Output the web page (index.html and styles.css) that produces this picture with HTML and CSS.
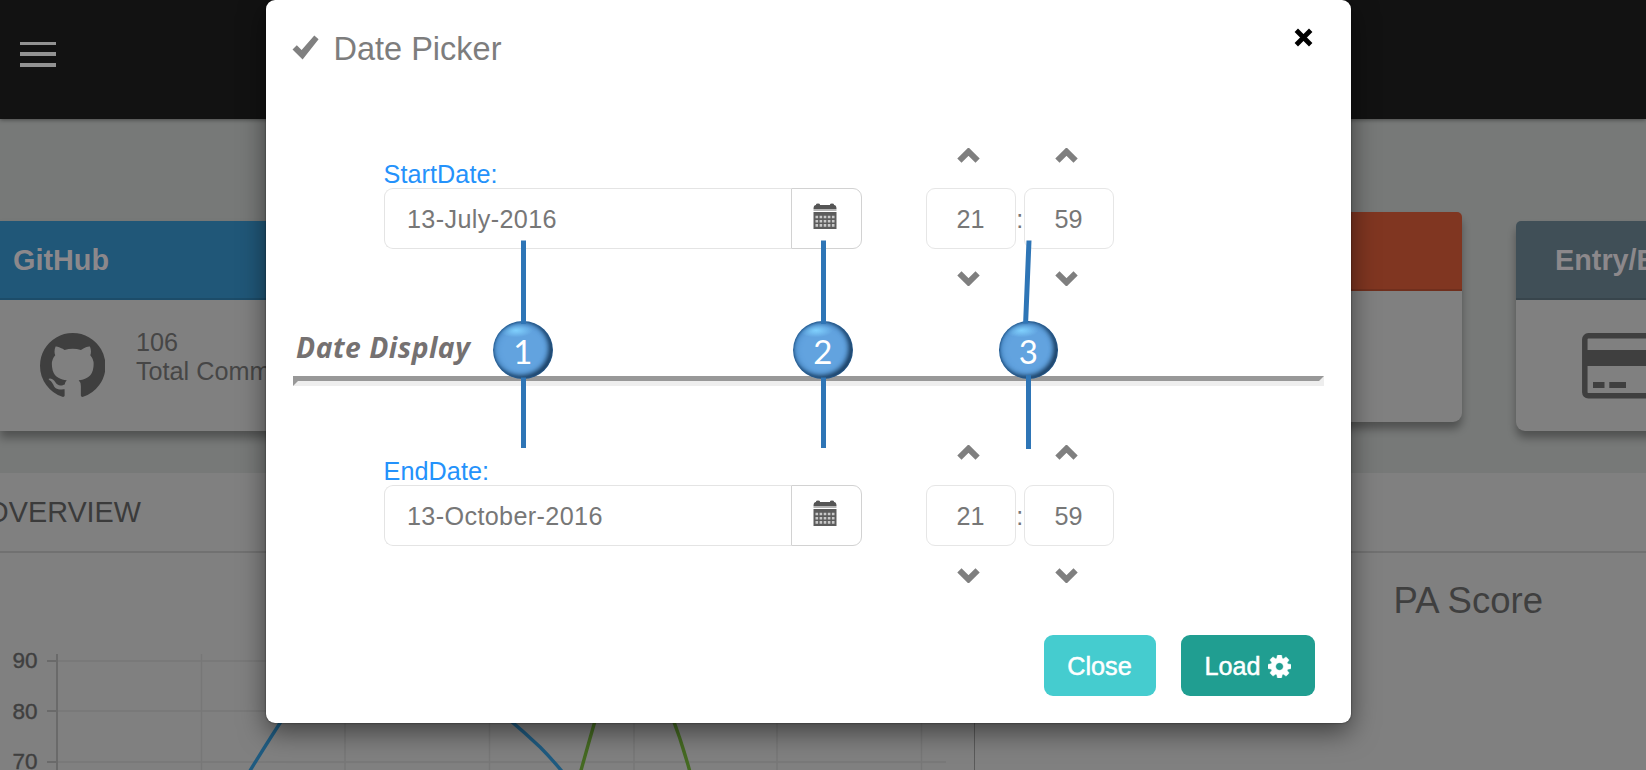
FILE: index.html
```html
<!DOCTYPE html>
<html lang="en">
<head>
<meta charset="utf-8">
<title>Date Picker</title>
<link rel="stylesheet" href="styles.css">
</head>
<body>
<div class="page">
  <header class="topbar">
    <div class="burger"><span></span><span></span><span></span></div>
  </header>

  <section class="cards">
    <article class="card card-github">
      <h3 class="card-head blue">GitHub</h3>
      <div class="card-body">
        <svg class="octocat" viewBox="128 128 1536 1500"><path d="M896 128q209 0 385.5 103t279.5 279.5 103 385.5q0 251-146.5 451.5t-378.5 277.5q-27 5-40-7t-13-30q0-3 .5-76.5t.5-134.5q0-97-52-142 57-6 102.5-18t94-39 81-66.5 53-105 20.5-150.5q0-119-79-206 37-91-8-204-28-9-81 11t-92 44l-38 24q-93-26-192-26t-192 26q-16-11-42.5-27t-83.5-38.5-85-13.5q-45 113-8 204-79 87-79 206 0 85 20.5 150t52.5 105 80.5 67 94 39 102.5 18q-39 36-49 103-21 10-45 15t-57 5-65.5-21.5-55.5-62.5q-19-32-48.5-52t-49.5-24l-20-3q-21 0-29 4.5t-5 11.5 9 14 13 12l7 5q22 10 43.5 38t31.5 51l10 23q13 38 44 61.5t67 30 69.5 7 55.5-3.5l23-4q0 38 .5 88.5t.5 54.5q0 18-13 30t-40 7q-232-77-378.5-277.5t-146.5-451.5q0-209 103-385.5t279.5-279.5 385.5-103z"/></svg>
        <div class="stat"><div>106</div><div>Total Comm</div></div>
      </div>
    </article>
    <article class="card card-raised">
      <h3 class="card-head orange"></h3>
      <div class="card-body"></div>
    </article>
    <article class="card card-entry">
      <h3 class="card-head slate">Entry/Exit</h3>
      <div class="card-body">
        <svg class="credit" viewBox="0 0 84 66"><rect x="2.8" y="2.8" width="78.4" height="60" rx="3.5" fill="none" stroke="#3f3f3f" stroke-width="5.5"/><path d="M3 17h78v16H3zM11 49h11.5v6H11zM27.300 49h16.700v6H27.300z" fill="#3f3f3f"/></svg>
      </div>
    </article>
  </section>

  <section class="panel">
    <div class="panel-head"><span class="panel-title">OVERVIEW</span></div>
    <div class="panel-body">
      <div class="chart">
        <svg width="974" height="217" viewBox="0 553 974 217">
          <g class="grid">
            <path d="M57 661H946M57 711H946M57 762H946M201.500 654V770M345 654V770M489.500 654V770M634 654V770M777 654V770M921.500 654V770"/>
          </g>
          <path class="axis" d="M57 654V770M47 661H57M47 711H57M47 762H57"/>
          <g class="ticks"><text x="12.500" y="667.500">90</text><text x="12.500" y="718.500">80</text><text x="12.500" y="768.500">70</text></g>
          <path class="series-blue" d="M248 774Q270 738 286 714M505 716Q522 730 540 747Q552 759 565 775"/>
          <path class="series-green" d="M580 774Q588 745 597 714M671 714Q682 742 690.500 774"/>
        </svg>
      </div>
      <div class="score">PA Score</div>
    </div>
  </section>

  <div class="modal">
    <div class="modal-head">
      <svg class="check" viewBox="0 0 27 25"><path d="M0.500 14.500L4.800 10.200L9.600 15L22.300 0.400L26.600 4.200L10.600 24.600Z" fill="#808080"/></svg>
      <h2>Date Picker</h2>
      <svg class="dismiss" viewBox="0 0 19 19"><path d="M2.300 2.300L16.700 16.700M16.700 2.300L2.300 16.700" stroke="#000" stroke-width="4.800"/></svg>
    </div>

    <div class="row">
      <div class="field">
        <label>StartDate:</label>
        <div class="group">
          <div class="input">13-July-2016</div>
          <div class="cal"><svg viewBox="0 0 24 26"><path d="M3 1.500Q3 .5 5 .5T7 1.500V2h10v-.5q0-1 2-1t2 1V2q2.500 0 2.500 4H.5q0-4 2.500-4z" fill="#555"/><path d="M.5 6h23v2H.5z" fill="#b5b5b5"/><path d="M.5 9h23V26H.5z" fill="#5c5c5c"/><path d="M2.500 14h19M2.500 18.200h19M2.500 22.400h19" stroke="#c8c8c8" stroke-width="2.600" stroke-dasharray="2.600 1.500"/></svg></div>
        </div>
      </div>
      <div class="time">
        <svg class="chev" viewBox="0 0 23 15"><path d="M2.400 12.600L11.500 3.600L20.600 12.600"/></svg><i></i><svg class="chev" viewBox="0 0 23 15"><path d="M2.400 12.600L11.500 3.600L20.600 12.600"/></svg>
        <div class="num">21</div><div class="colon">:</div><div class="num">59</div>
        <svg class="chev down" viewBox="0 0 23 15"><path d="M2.400 2.400L11.500 11.400L20.600 2.400"/></svg><i></i><svg class="chev down" viewBox="0 0 23 15"><path d="M2.400 2.400L11.500 11.400L20.600 2.400"/></svg>
      </div>
    </div>

    <div class="divider-title">Date Display</div>
    <hr>

    <div class="row row-end">
      <div class="field">
        <label>EndDate:</label>
        <div class="group">
          <div class="input">13-October-2016</div>
          <div class="cal"><svg viewBox="0 0 24 26"><path d="M3 1.500Q3 .5 5 .5T7 1.500V2h10v-.5q0-1 2-1t2 1V2q2.500 0 2.500 4H.5q0-4 2.500-4z" fill="#555"/><path d="M.5 6h23v2H.5z" fill="#b5b5b5"/><path d="M.5 9h23V26H.5z" fill="#5c5c5c"/><path d="M2.500 14h19M2.500 18.200h19M2.500 22.400h19" stroke="#c8c8c8" stroke-width="2.600" stroke-dasharray="2.600 1.500"/></svg></div>
        </div>
      </div>
      <div class="time">
        <svg class="chev" viewBox="0 0 23 15"><path d="M2.400 12.600L11.500 3.600L20.600 12.600"/></svg><i></i><svg class="chev" viewBox="0 0 23 15"><path d="M2.400 12.600L11.500 3.600L20.600 12.600"/></svg>
        <div class="num">21</div><div class="colon">:</div><div class="num">59</div>
        <svg class="chev down" viewBox="0 0 23 15"><path d="M2.400 2.400L11.500 11.400L20.600 2.400"/></svg><i></i><svg class="chev down" viewBox="0 0 23 15"><path d="M2.400 2.400L11.500 11.400L20.600 2.400"/></svg>
      </div>
    </div>

    <div class="actions">
      <div class="btn close">Close</div>
      <div class="btn load">Load <svg viewBox="128 128 1536 1536"><path fill="#fff" stroke="#fff" stroke-width="30" d="M1152 896q0-106-75-181t-181-75-181 75-75 181 75 181 181 75 181-75 75-181zm512-109v222q0 12-8 23t-20 13l-185 28q-19 54-39 91 35 50 107 138 10 12 10 25t-9 23q-27 37-99 108t-94 71q-12 0-26-9l-138-108q-44 23-91 38-16 136-29 186-7 28-36 28h-222q-14 0-24.500-8.500t-11.500-21.500l-28-184q-49-16-90-37l-141 107q-10 9-25 9-14 0-25-11-126-114-165-168-7-10-7-23 0-12 8-23 15-21 51-66.500t54-70.500q-27-50-41-99l-183-27q-13-2-21-12.500t-8-23.500v-222q0-12 8-23t19-13l186-28q14-46 39-92-40-57-107-138-10-12-10-24 0-10 9-23 26-36 98.500-107.500t94.500-71.500q13 0 26 10l138 107q44-23 91-38 16-136 29-186 7-28 36-28h222q14 0 24.500 8.500t11.500 21.500l28 184q49 16 90 37l142-107q9-9 24-9 13 0 25 10 129 119 165 170 7 8 7 22 0 12-8 23-15 21-51 66.500t-54 70.500q26 50 41 98l183 28q13 2 21 12.500t8 23.500z"/></svg></div>
    </div>
  </div>

  <div class="callout c1">1</div>
  <div class="callout c2">2</div>
  <div class="callout c3">3</div>
  <svg class="leaders" viewBox="0 0 1646 770"><path d="M523.500 240.500V324M523.500 377.500V448M823.500 240.500V324M823.500 377.500V448M1029 240.500L1025.600 323.500M1028.500 375V449"/></svg>
</div>
</body>
</html>
```
FILE: styles.css
```css
* { box-sizing: border-box; }
body { margin: 0; font-family: "Liberation Sans", Arial, sans-serif; font-size: 25.2px; }
.page { position: relative; width: 1646px; height: 770px; overflow: hidden; background: #777978; display: flex; flex-direction: column; }

.topbar { flex: none; height: 119px; background: #121212; padding: 41.500px 20px 0; box-shadow: 0 1px 4px rgba(0,0,0,.4); z-index: 1; }
.burger { display: flex; flex-direction: column; gap: 7.400px; width: 36px; }
.burger span { height: 3.600px; background: #929292; }

.cards { flex: none; height: 354px; display: flex; align-items: flex-start; padding-top: 101.500px; }
.card { flex: none; height: 210px; border-radius: 6px 6px 9px 9px; background: #808080; box-shadow: 0 7px 9px rgba(0,0,0,.33); }
.card-github { width: 420px; border-radius: 0; }
.card-raised { width: 420px; margin: -9px 54px 0 622px; }
.card-entry { width: 420px; }
.card-head { margin: 0; height: 79.500px; padding: 0 13px; border-radius: 5px 5px 0 0; font-size: 28.8px; line-height: 78px; color: #8c888b; border-bottom: 2px solid rgba(0,0,0,.12); }
.card-github .card-head { border-radius: 0; }
.blue { background: #205778; }
.orange { background: #803621; }
.slate { background: #404f57; padding-left: 39px; }
.card-body { display: flex; padding: 32.500px 0 0 39.500px; }
.octocat { width: 65.500px; height: 64px; fill: #3f3f3f; }
.stat { padding-left: 31px; margin-top: -4.500px; line-height: 28.800px; color: #464646; white-space: nowrap; }
.card-entry .card-body { padding-left: 66px; }
.credit { width: 84px; height: 66px; flex: none; }

.panel { flex: 1; background: #808080; }
.panel-head { height: 80px; border-bottom: 2px solid #717171; display: flex; }
.panel-title { width: 141px; display: flex; justify-content: flex-end; font-size: 28.8px; line-height: 79px; color: #3b3b3b; }
.panel-body { display: flex; height: 217px; }
.chart { width: 975px; flex: none; border-right: 1.500px solid #5a5a5a; }
.chart svg { display: block; overflow: hidden; }
.grid path { stroke: #777; stroke-width: 1.500; }
.axis { stroke: #6a6a6a; stroke-width: 2; }
.ticks { font-size: 22.500px; fill: #3f3f3f; stroke: #3f3f3f; stroke-width: .4; }
.series-blue, .series-green { fill: none; stroke-width: 3.4; }
.series-blue { stroke: #1f5b80; }
.series-green { stroke: #456a22; }
.score { padding: 27px 0 0 418.500px; font-size: 36.5px; line-height: 42px; color: #3f3f3f; white-space: nowrap; }

.modal { position: absolute; left: 266px; top: 0; width: 1085px; height: 723px; background: #fff; border-radius: 9px; box-shadow: 0 9px 27px rgba(0,0,0,.5), 0 0 2px rgba(0,0,0,.6); z-index: 2; }
.modal-head { display: flex; align-items: flex-start; height: 148px; padding: 35px 38.500px 0 26px; color: #7d7d7d; }
.check { width: 27px; height: 25px; }
.modal-head h2 { margin: -4px 0 0 14.500px; flex: 1; font-size: 32.5px; line-height: 37px; font-weight: 400; }
.dismiss { width: 19px; height: 19px; margin-top: -7px; }
.row { height: 138px; padding-left: 117.500px; display: flex; }
.field { width: 478.800px; padding-top: 11.200px; }
.field label { display: block; height: 29px; line-height: 30px; color: #2492fb; letter-spacing: .08px; }
.group { display: flex; height: 61px; border-radius: 9px; }
.input { flex: 1; border: 1.800px solid #e4e4e4; border-right: 0; border-radius: 9px 0 0 9px; padding-left: 22.500px; line-height: 60px; color: #777; letter-spacing: .36px; }
.cal { width: 71.500px; border: 1.800px solid #d2d2d2; border-radius: 0 9px 9px 0; display: flex; justify-content: center; padding-top: 14px; }
.cal svg { width: 24px; height: 26px; margin-left: -4px; }
.time { margin-left: 64px; padding-top: .2px; display: grid; grid-template-columns: 90px 8px 90px; grid-template-rows: 40px 61px 37px; color: #777; }
.chev { width: 23px; height: 15px; margin: 0 0 0 31px; fill: none; stroke: #7f7f7f; stroke-width: 6; }
.chev.down { align-self: end; }
.num { border: 1.800px solid #e6e6e6; border-radius: 9px; line-height: 60px; text-align: center; padding-right: 1.500px; }
.colon { line-height: 62px; text-align: center; padding-right: 1px; }
.divider-title { height: 90px; padding: 43px 0 0 30px; line-height: 36px; font-family: "Open Sans", sans-serif; font-size: 28.300px; font-weight: 700; font-style: italic; color: #757171; letter-spacing: .500px; }
hr { margin: 0 27.500px 0 27px; height: 0; border: 5.400px solid; border-color: #989898 #eee #eee #989898; }
.row-end { margin-top: 58.500px; }
.actions { display: flex; justify-content: flex-end; gap: 25px; padding: 52px 36.500px 0 0; }
.btn { height: 61.500px; border-radius: 9px; line-height: 61px; padding-top: 1.500px; color: #fff; -webkit-text-stroke: .5px #fff; display: flex; align-items: center; justify-content: center; }
.close { width: 112px; background: #45cccf; }
.load { width: 134px; background: #209e91; gap: 7px; }
.load svg { width: 23px; height: 23px; }

.callout { position: absolute; z-index: 3; top: 321px; width: 59.500px; height: 58px; border-radius: 50%; background: radial-gradient(ellipse 17px 7px at 38% 16%, #82d3ff, rgba(130,211,255,0)), #62a3df; color: #fff; text-align: center; font-family: Lato, sans-serif; font-size: 33px; line-height: 60px; box-shadow: inset 0 0 2px 1px #285d91, inset -3px -2px 5px 1px #1a3b5c, inset 0 0 6px 2px #3d7db9; }
.c1 { left: 493px; }
.c2 { left: 793px; }
.c3 { left: 998.500px; }
.leaders { position: absolute; inset: 0; z-index: 4; width: 1646px; height: 770px; fill: none; stroke: #2e75b6; stroke-width: 5; }
```
